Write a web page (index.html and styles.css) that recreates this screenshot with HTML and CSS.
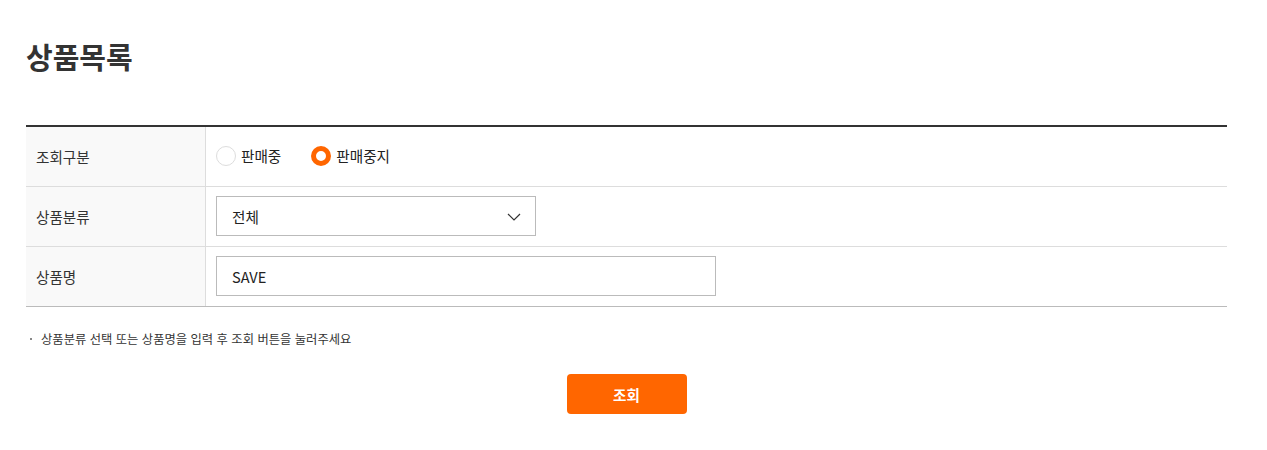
FILE: index.html
```html
<!DOCTYPE html>
<html lang="ko">
<head>
<meta charset="utf-8">
<link rel="stylesheet" href="styles.css">
</head>
<body>
<div class="page">
  <h1 class="title">상품목록</h1>
  <div class="table">
    <div class="row">
      <div class="th">조회구분</div>
      <div class="td">
        <label class="radio"><span class="dot"></span><span>판매중</span></label>
        <label class="radio on"><span class="dot"></span><span>판매중지</span></label>
      </div>
    </div>
    <div class="row">
      <div class="th">상품분류</div>
      <div class="td box">
        <div class="select"><span>전체</span>
          <svg class="chev" width="14" height="8" viewBox="0 0 14 8"><path d="M1 1 L7 7 L13 1" fill="none" stroke="#333" stroke-width="1.2"/></svg>
        </div>
      </div>
    </div>
    <div class="row last">
      <div class="th">상품명</div>
      <div class="td box">
        <div class="input">SAVE</div>
      </div>
    </div>
  </div>
  <p class="note"><span class="bullet"></span>상품분류 선택 또는 상품명을 입력 후 조회 버튼을 눌러주세요</p>
  <div class="actions"><button class="btn">조회</button></div>
</div>
</body>
</html>
```
FILE: styles.css
```css
* { box-sizing: border-box; }
body {
  margin: 0;
  font-family: "Noto Sans CJK KR", "Noto Sans", sans-serif;
  color: #333;
  background: #fff;
}
.page { padding: 33px 40px 0 26px; }
.title {
  margin: 0;
  font-size: 29px;
  font-weight: 700;
  line-height: 46px;
  color: #333;
}
.table {
  margin-top: 46px;
  border-top: 2px solid #333;
  border-bottom: 1px solid #bbb;
}
.row {
  display: flex;
  height: 60px;
  border-bottom: 1px solid #ddd;
}
.row.last { border-bottom: 0; height: 59px; }
.th {
  width: 180px;
  background: #f9f9f9;
  border-right: 1px solid #ddd;
  padding-left: 10px;
  display: flex;
  align-items: center;
  font-size: 14.6px;
  padding-bottom: 1px;
}
.td {
  flex: 1;
  display: flex;
  align-items: center;
  padding-left: 10px;
  font-size: 14.6px;
  padding-bottom: 2px;
}
.td.box {
  align-items: flex-start;
  padding-top: 9px;
  padding-bottom: 0;
}
.radio {
  display: flex;
  align-items: center;
  gap: 5px;
  margin-right: 30px;
  color: #222;
}
.dot {
  width: 20px; height: 20px;
  border-radius: 50%;
  border: 1px solid #ddd;
  background: #fff;
}
.radio.on .dot {
  border: 5px solid #ff6600;
}
.select {
  width: 320px; height: 40px;
  border: 1px solid #bbb;
  display: flex;
  align-items: center;
  justify-content: space-between;
  padding: 0 14px 0 15px;
  color: #222;
}
.chev { margin-top: 2px; }
.input {
  width: 500px; height: 40px;
  border: 1px solid #bbb;
  display: flex;
  align-items: center;
  padding-left: 15px;
  color: #222;
}
.note {
  margin: 23px 0 0 4px;
  font-size: 12.3px;
  display: flex;
  align-items: center;
  line-height: 18px;
}
.bullet {
  width: 2px; height: 2px;
  background: #888;
  margin-right: 9px;
}
.actions {
  display: flex;
  justify-content: center;
  margin-top: 26px;
}
.btn {
  width: 120px; height: 40px;
  background: #ff6600;
  color: #fff;
  border: 0;
  border-radius: 4px;
  font-family: inherit;
  font-weight: 700;
  font-size: 14.6px;
}
```
